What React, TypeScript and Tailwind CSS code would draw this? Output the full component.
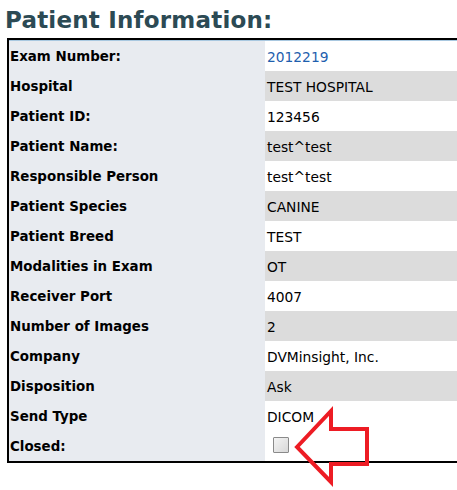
const rows: { label: string; value: string; link?: boolean; check?: boolean }[] = [
  { label: "Exam Number:", value: "2012219", link: true },
  { label: "Hospital", value: "TEST HOSPITAL" },
  { label: "Patient ID:", value: "123456" },
  { label: "Patient Name:", value: "test^test" },
  { label: "Responsible Person", value: "test^test" },
  { label: "Patient Species", value: "CANINE" },
  { label: "Patient Breed", value: "TEST" },
  { label: "Modalities in Exam", value: "OT" },
  { label: "Receiver Port", value: "4007" },
  { label: "Number of Images", value: "2" },
  { label: "Company", value: "DVMinsight, Inc." },
  { label: "Disposition", value: "Ask" },
  { label: "Send Type", value: "DICOM" },
  { label: "Closed:", value: "", check: true },
];

function Arrow() {
  return (
    <svg className="absolute left-0 top-0 pointer-events-none" width="457" height="490">
      <polygon
        points="297,447 331,411 331,429 367,429 367,464 331,464 331,482"
        fill="none"
        stroke="#ed1c24"
        strokeWidth="4"
        strokeLinejoin="miter"
      />
    </svg>
  );
}

export default function App() {
  return (
    <div className="relative w-[457px] h-[490px] overflow-hidden bg-white font-['DejaVu_Sans',sans-serif]">
      <h1 className="pl-[5px] pt-[5px] h-[38px] text-[23px] font-bold leading-[30px] tracking-[0.2px] text-[#2c4a54]">
        Patient Information:
      </h1>
      <div className="ml-[7px] w-[480px] border-2 border-black border-r-0">
        <div className="h-px bg-[#a9c8e0]" />
        {rows.map((r, i) => (
          <div key={r.label} className="flex h-[30px] items-center">
            <div className="w-[256px] h-full flex items-center pl-[1px] pt-[2px] bg-[#e8ebf0] text-[13.4px] font-bold text-black">
              {r.label}
            </div>
            <div
              className={`flex-1 h-full flex items-center pl-[2px] pt-[2px] text-[13.8px] ${
                i % 2 === 1 && !r.check ? "bg-[#dcdcdc]" : "bg-white"
              } ${r.link ? "text-[#1f5fae]" : "text-black"}`}
            >
              {r.check ? (
                <span className="ml-[6px] mb-[5px] block w-[16px] h-[16px] border border-[#8a8a8a] bg-gradient-to-br from-[#f4f4f4] to-[#d8d8d8] rounded-[1px]" />
              ) : (
                r.value
              )}
            </div>
          </div>
        ))}
      </div>
      <Arrow />
    </div>
  );
}
